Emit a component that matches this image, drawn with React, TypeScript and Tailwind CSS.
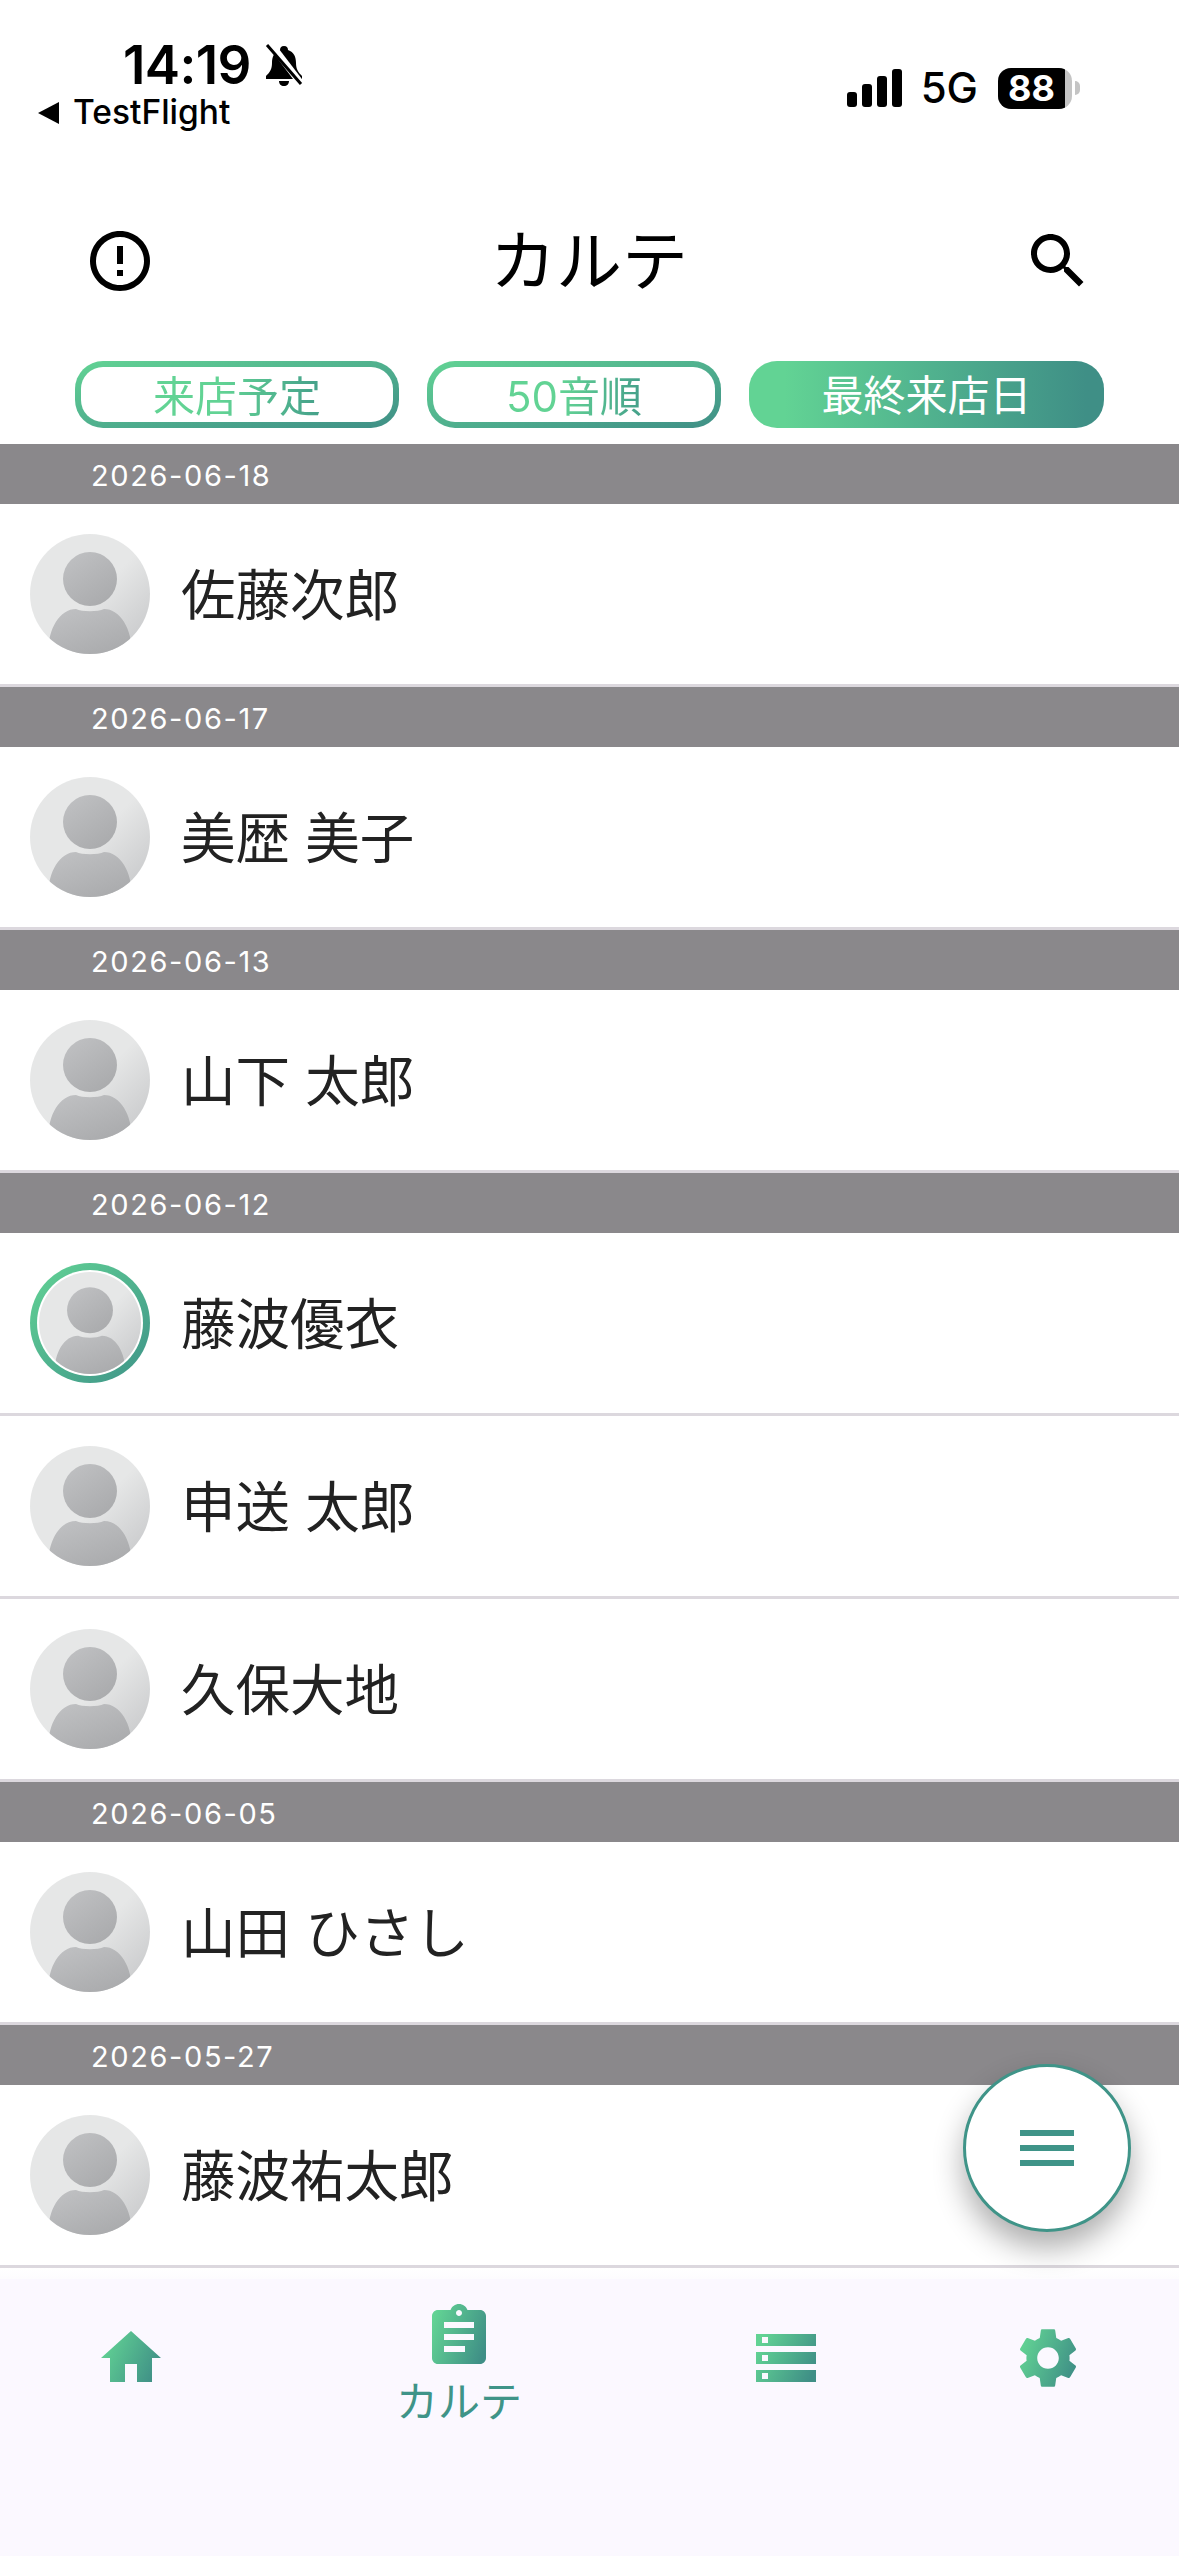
import { useId } from 'react'

type Patient = { name: string; ring?: boolean }
type Group = { date: string; patients: Patient[] }

const groups: Group[] = [
  { date: '2026-06-18', patients: [{ name: '佐藤次郎' }] },
  { date: '2026-06-17', patients: [{ name: '美歴 美子' }] },
  { date: '2026-06-13', patients: [{ name: '山下 太郎' }] },
  {
    date: '2026-06-12',
    patients: [{ name: '藤波優衣', ring: true }, { name: '申送 太郎' }, { name: '久保大地' }],
  },
  { date: '2026-06-05', patients: [{ name: '山田 ひさし' }] },
  { date: '2026-05-27', patients: [{ name: '藤波祐太郎' }] },
]

function GradientIcon({ d }: { d: string }) {
  const id = useId()
  return (
    <svg viewBox="0 0 24 24" className="h-[72px] w-[72px]">
      <defs>
        <linearGradient id={id} x1="0" y1="0.3" x2="1" y2="0.7">
          <stop offset="0" stopColor="#62d394" />
          <stop offset="1" stopColor="#3f8f86" />
        </linearGradient>
      </defs>
      <path fill={`url(#${id})`} d={d} />
    </svg>
  )
}

function Avatar({ size }: { size: string }) {
  const id = useId()
  return (
    <svg viewBox="0 0 120 120" className={size}>
      <defs>
        <linearGradient id={`${id}bg`} x1="0.2" y1="0.2" x2="1" y2="1">
          <stop offset="0.4" stopColor="#e6e7e7" />
          <stop offset="1" stopColor="#c3c4c6" />
        </linearGradient>
        <linearGradient id={`${id}fg`} x1="0.2" y1="0" x2="0.9" y2="1">
          <stop offset="0" stopColor="#bfc0c2" />
          <stop offset="1" stopColor="#a8a9ab" />
        </linearGradient>
        <clipPath id={`${id}c`}>
          <circle cx="60" cy="60" r="60" />
        </clipPath>
      </defs>
      <circle cx="60" cy="60" r="60" fill={`url(#${id}bg)`} />
      <g clipPath={`url(#${id}c)`}>
        <circle cx="60" cy="45" r="27" fill={`url(#${id}fg)`} />
        <path
          d="M18 120 C18 94 30 75 46 75 C52 78 68 78 74 75 C90 75 102 94 102 120 Z"
          fill={`url(#${id}fg)`}
        />
      </g>
    </svg>
  )
}

function Row({ patient }: { patient: Patient }) {
  return (
    <div className="flex h-[183px] items-center gap-[31px] border-b-[3px] border-[#dcd8de] bg-white pl-[30px]">
      {patient.ring ? (
        <div className="h-[120px] w-[120px] rounded-full bg-gradient-to-br from-[#62d394] to-[#3f9488] p-[7px]">
          <div className="rounded-full bg-white p-[2px]">
            <Avatar size="h-[102px] w-[102px] block" />
          </div>
        </div>
      ) : (
        <Avatar size="h-[120px] w-[120px] block" />
      )}
      <span className="pt-[3px] text-[54.5px] leading-none text-[#222222]">{patient.name}</span>
    </div>
  )
}

function Pill({ label, w, active }: { label: string; w: string; active?: boolean }) {
  if (active) {
    return (
      <div
        className={`${w} flex h-[67px] items-center justify-center rounded-[28px] bg-gradient-to-r from-[#62d394] from-10% to-[#3f8f86] to-95% pt-[2px] text-[42px] leading-none text-white`}
      >
        {label}
      </div>
    )
  }
  return (
    <div className={`${w} h-[67px] rounded-[28px] bg-gradient-to-br from-[#62d394] to-[#3f8f86] p-[6px]`}>
      <div className="flex h-full items-center justify-center rounded-[22px] bg-white pt-[4px]">
        <span className="bg-gradient-to-r from-[#62d394] from-40% to-[#45a08a] bg-clip-text text-[42px] leading-none text-transparent">
          {label}
        </span>
      </div>
    </div>
  )
}

export default function App() {
  return (
    <div className="relative h-[2556px] w-[1179px] overflow-hidden bg-white [font-family:Inter,'Noto_Sans_CJK_JP',sans-serif]">
      {/* status bar */}
      <div className="flex h-[225px] justify-between text-black">
        <div className="pl-[38px] pt-[37px]">
          <div className="ml-[85px] flex h-[56px] items-center gap-[13px]">
            <span className="text-[53px] font-semibold leading-none tracking-[-0.6px]">14:19</span>
            <svg viewBox="0 0 40 42" className="h-[42px] w-[40px]">
              <path
                d="M20 2 C23 2 24 4 24 6 C30 8 32 13 32 19 C32 25 34 28 38 32 V35 H2 V32 C6 28 8 25 8 19 C8 13 10 8 16 6 C16 4 17 2 20 2 Z M15 37 H25 C25 40 23 42 20 42 C17 42 15 40 15 37 Z"
                fill="#000"
              />
              <path d="M6 -1 L38 41" stroke="#fff" strokeWidth="7" />
              <path d="M3 1 L37 40" stroke="#000" strokeWidth="3" />
            </svg>
          </div>
          <div className="mt-[3px] flex h-[34px] items-center gap-[14px]">
            <span className="h-0 w-0 border-y-[11px] border-r-[21px] border-y-transparent border-r-black" />
            <span className="text-[33.5px] font-medium leading-none">TestFlight</span>
          </div>
        </div>
        <div className="flex h-fit items-center pr-[99px] pt-[67px]">
          <div className="flex items-end gap-[5px]">
            <span className="h-[15px] w-[10px] rounded-[3px] bg-black" />
            <span className="h-[23px] w-[10px] rounded-[3px] bg-black" />
            <span className="h-[31px] w-[10px] rounded-[3px] bg-black" />
            <span className="h-[38px] w-[10px] rounded-[3px] bg-black" />
          </div>
          <span className="ml-[19px] text-[42px] font-medium leading-none">5G</span>
          <div className="ml-[20px] h-[41px] w-[74px] overflow-hidden rounded-[13px] bg-[#c4c4c4]">
            <div className="flex h-full w-[67px] items-center justify-center bg-black text-[36px] font-bold leading-none text-white">
              88
            </div>
          </div>
          <span className="ml-[3px] h-[14px] w-[5px] rounded-r-full bg-[#c4c4c4]" />
        </div>
      </div>

      {/* header */}
      <div className="flex h-[72px] items-center justify-between pl-[84px] pr-[85px]">
        <svg viewBox="0 0 24 24" className="h-[72px] w-[72px]">
          <path d="M11 15h2v2h-2zm0-8h2v6h-2zm.99-5C6.47 2 2 6.48 2 12s4.47 10 9.99 10C17.52 22 22 17.52 22 12S17.52 2 11.99 2zM12 20c-4.42 0-8-3.58-8-8s3.58-8 8-8 8 3.58 8 8-3.58 8-8 8z" />
        </svg>
        <span className="text-[66px] leading-none text-black">カルテ</span>
        <svg viewBox="0 0 24 24" className="h-[72px] w-[72px]">
          <path d="M15.5 14h-.79l-.28-.27C15.41 12.59 16 11.11 16 9.5 16 5.91 13.09 3 9.5 3S3 5.91 3 9.5 5.91 16 9.5 16c1.61 0 3.09-.59 4.23-1.57l.27.28v.79l5 4.99L20.49 19l-4.99-5zm-6 0C7.01 14 5 11.99 5 9.5S7.01 5 9.5 5 14 7.01 14 9.5 11.99 14 9.5 14z" />
        </svg>
      </div>

      {/* filter pills */}
      <div className="mt-[64px] flex gap-[28px] pl-[75px]">
        <Pill label="来店予定" w="w-[324px]" />
        <Pill label="50音順" w="w-[294px]" />
        <Pill label="最終来店日" w="w-[355px]" active />
      </div>

      {/* list */}
      <div className="mt-[16px]">
        {groups.map((group) => (
          <div key={group.date}>
            <div className="flex h-[60px] items-center bg-[#8a888b] pl-[91px] pt-[2px] text-[29px] leading-none tracking-[1.6px] text-white">
              {group.date}
            </div>
            {group.patients.map((patient) => (
              <Row key={patient.name} patient={patient} />
            ))}
          </div>
        ))}
      </div>

      {/* bottom nav */}
      <div className="h-[11px] bg-gradient-to-b from-white to-[#fdfcfe]" />
      <div className="grid h-[277px] grid-cols-[262px_394px_260px_263px] justify-items-center bg-[#fbf8ff]">
        <div className="pt-[43px]">
          <GradientIcon d="M10 20v-6h4v6h5v-8h3L12 3 2 12h3v8z" />
        </div>
        <div className="flex flex-col items-center pt-[22px]">
          <GradientIcon d="M19 3h-4.18C14.4 1.84 13.3 1 12 1c-1.3 0-2.4.84-2.82 2H5c-1.1 0-2 .9-2 2v14c0 1.1.9 2 2 2h14c1.1 0 2-.9 2-2V5c0-1.1-.9-2-2-2zm-7 0c.55 0 1 .45 1 1s-.45 1-1 1-1-.45-1-1 .45-1 1-1zm2 14H7v-2h7v2zm3-4H7v-2h10v2zm0-4H7V7h10v2z" />
          <span className="mt-[8px] text-[42px] leading-none text-[#3f9488]">カルテ</span>
        </div>
        <div className="pt-[43px]">
          <GradientIcon d="M2 20h20v-4H2v4zm2-3h2v2H4v-2zM2 4v4h20V4H2zm4 3H4V5h2v2zm-4 7h20v-4H2v4zm2-3h2v2H4v-2z" />
        </div>
        <div className="pt-[43px]">
          <GradientIcon d="M19.14 12.94c.04-.3.06-.61.06-.94 0-.32-.02-.64-.07-.94l2.03-1.58c.18-.14.23-.41.12-.61l-1.92-3.32c-.12-.22-.37-.29-.59-.22l-2.39.96c-.5-.38-1.03-.7-1.62-.94l-.36-2.54c-.04-.24-.24-.41-.48-.41h-3.84c-.24 0-.43.17-.47.41l-.36 2.54c-.59.24-1.13.57-1.62.94l-2.39-.96c-.22-.08-.47 0-.59.22L2.74 8.87c-.12.21-.08.47.12.61l2.03 1.58c-.05.3-.09.63-.09.94s.02.64.07.94l-2.03 1.58c-.18.14-.23.41-.12.61l1.92 3.32c.12.22.37.29.59.22l2.39-.96c.5.38 1.03.7 1.62.94l.36 2.54c.05.24.24.41.48.41h3.84c.24 0 .44-.17.47-.41l.36-2.54c.59-.24 1.13-.56 1.62-.94l2.39.96c.22.08.47 0 .59-.22l1.92-3.32c.12-.22.07-.47-.12-.61l-2.01-1.58zM12 15.6c-1.98 0-3.6-1.62-3.6-3.6s1.62-3.6 3.6-3.6 3.6 1.62 3.6 3.6-1.62 3.6-3.6 3.6z" />
        </div>
      </div>

      {/* floating menu button */}
      <div className="absolute left-[963px] top-[2064px] flex h-[168px] w-[168px] flex-col items-center justify-center gap-[9px] rounded-full border-[3px] border-[#3f9488] bg-white shadow-[0_16px_30px_rgba(0,0,0,0.32)]">
        <span className="h-[6px] w-[54px] bg-[#3f9488]" />
        <span className="h-[6px] w-[54px] bg-[#3f9488]" />
        <span className="h-[6px] w-[54px] bg-[#3f9488]" />
      </div>
    </div>
  )
}
